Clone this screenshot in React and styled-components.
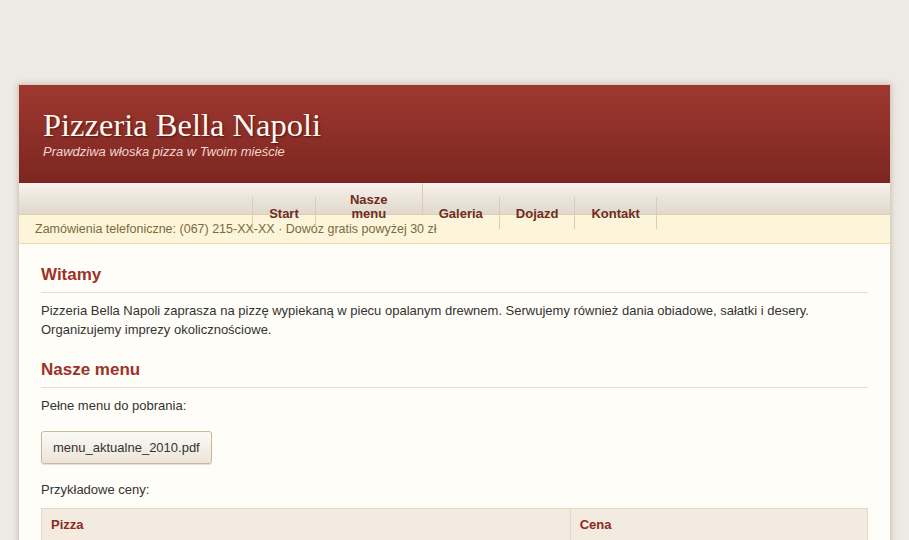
import React from 'react';
import styled, {createGlobalStyle} from 'styled-components';

const GlobalStyle = createGlobalStyle`
  body {
    margin: 0;
    background: #ede9e3;
    font-family: "Liberation Sans", Arial, sans-serif;
    color: #333;
  }
`;

const Page = styled.div`
  width: 873px;
  margin: 84px auto 0;
  border: 1px solid #d8cfc0;
  border-bottom: none;
  box-sizing: border-box;
  box-shadow: 0 0 6px rgba(90, 70, 40, 0.25);
  background: #fffdf7;
`;

const Header = styled.header`
  height: 98px;
  box-sizing: border-box;
  padding: 22px 24px 0;
  background: linear-gradient(to bottom, #9e3830, #7c2620);
`;

const Title = styled.h1`
  margin: 0;
  font-family: "Liberation Serif", "DejaVu Serif", serif;
  font-weight: normal;
  font-size: 32.5px;
  line-height: 36px;
  color: #fdf8f2;
  text-shadow: 1px 1px 2px rgba(40, 0, 0, 0.6);
`;

const Tagline = styled.p`
  margin: 1px 0 0;
  font-style: italic;
  font-size: 13px;
  color: #f1d6cf;
`;

const Nav = styled.nav`
  position: relative;
  z-index: 1;
  height: 32px;
  text-align: center;
  font-size: 0;
  background: linear-gradient(to bottom, #f6f2ec, #e0d8cb);
  border-bottom: 1px solid #ddd0b4;
  box-sizing: border-box;
`;

const NavItem = styled.a`
  display: inline-block;
  vertical-align: baseline;
  height: 32px;
  box-sizing: border-box;
  padding: 10px 16px 0;
  width: ${p => p.$width || 'auto'};
  font-size: 13px;
  line-height: 14px;
  font-weight: bold;
  color: #6e2c24;
  border-right: 1px solid #d9ccb9;
  &:first-child {
    border-left: 1px solid #d9ccb9;
  }
`;

const InfoBar = styled.div`
  height: 29px;
  box-sizing: border-box;
  padding: 7px 16px 0;
  font-size: 12.5px;
  color: #7b6a3c;
  background: #fdf5da;
  border-bottom: 1px solid #e8dca8;
`;

const Content = styled.main`
  padding: 20px 22px 0;
`;

const Heading = styled.h2`
  margin: ${p => (p.$first ? '0' : '20px')} 0 0;
  padding-bottom: 6px;
  font-size: 17px;
  line-height: 22px;
  color: #9b3328;
  border-bottom: 1px solid #e6dcc6;
`;

const Text = styled.p`
  margin: ${p => p.$gap || '8px'} 0 0;
  font-size: 13px;
  line-height: 19px;
  color: #333;
`;

const Download = styled.button`
  display: block;
  margin-top: 16px;
  height: 33px;
  padding: 0 11px;
  font-family: "Liberation Sans", Arial, sans-serif;
  font-size: 13px;
  color: #333;
  border: 1px solid #c8b89c;
  border-radius: 3px;
  background: linear-gradient(to bottom, #fcfaf5, #ece4d7);
  box-shadow: 0 1px 1px rgba(120, 100, 70, 0.2);
`;

const Table = styled.table`
  width: 100%;
  margin-top: 9px;
  border-collapse: collapse;
  font-size: 13px;
`;

const Th = styled.th`
  width: ${p => p.$width || 'auto'};
  text-align: left;
  padding: 8px 9px 12px;
  background: #f3ebe0;
  border: 1px solid #e4d8c4;
  color: #8c2a21;
`;

const links = ['Start', 'Nasze menu', 'Galeria', 'Dojazd', 'Kontakt'];

export default function App() {
    return (
        <>
            <GlobalStyle/>
            <Page>
                <Header>
                    <Title>Pizzeria Bella Napoli</Title>
                    <Tagline>Prawdziwa włoska pizza w Twoim mieście</Tagline>
                </Header>
                <Nav>
                    {links.map(l => (
                        <NavItem key={l} $width={l === 'Nasze menu' ? '107px' : undefined}>
                            {l === 'Nasze menu' ? <>Nasze<br/>menu</> : l}
                        </NavItem>
                    ))}
                </Nav>
                <InfoBar>
                    Zamówienia telefoniczne: (067) 215-XX-XX · Dowóz gratis powyżej 30 zł
                </InfoBar>
                <Content>
                    <Heading $first>Witamy</Heading>
                    <Text>
                        Pizzeria Bella Napoli zaprasza na pizzę wypiekaną w piecu opalanym drewnem. Serwujemy
                        również dania obiadowe, sałatki i desery. Organizujemy imprezy okolicznościowe.
                    </Text>
                    <Heading>Nasze menu</Heading>
                    <Text>Pełne menu do pobrania:</Text>
                    <Download>menu_aktualne_2010.pdf</Download>
                    <Text $gap="16px">Przykładowe ceny:</Text>
                    <Table>
                        <thead>
                        <tr>
                            <Th $width="64%">Pizza</Th>
                            <Th>Cena</Th>
                        </tr>
                        </thead>
                    </Table>
                </Content>
            </Page>
        </>
    );
}
